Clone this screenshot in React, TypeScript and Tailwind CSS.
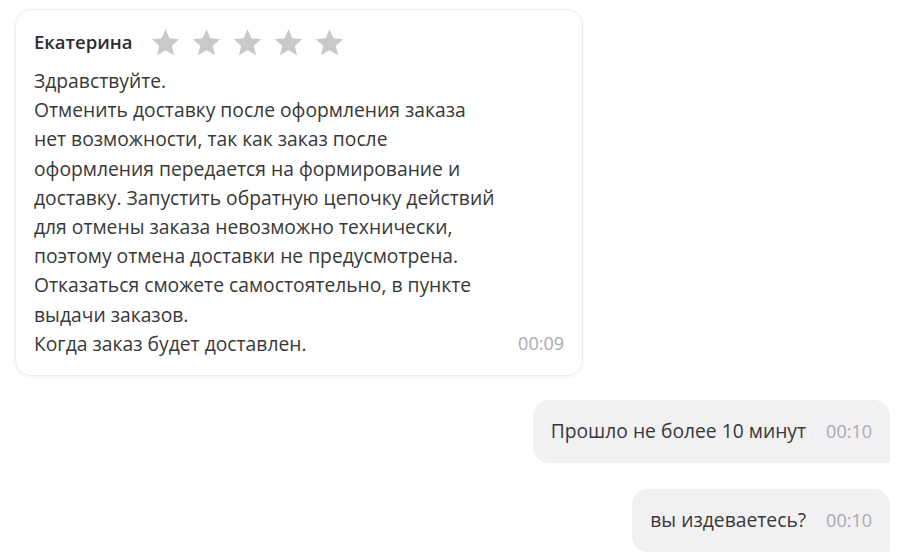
import React from "react";

const Star = () => (
  <svg viewBox="0 0 24 24" className="w-[31px] h-[31px]" fill="#c9c9cb">
    <path d="M12 1.8l3.05 6.95 7.55.7-5.7 5 1.7 7.4L12 17.95 5.4 21.85l1.7-7.4-5.7-5 7.55-.7z" />
  </svg>
);

const bodyLines = [
  "Здравствуйте.",
  "Отменить доставку после оформления заказа",
  "нет возможности, так как заказ после",
  "оформления передается на формирование и",
  "доставку. Запустить обратную цепочку действий",
  "для отмены заказа невозможно технически,",
  "поэтому отмена доставки не предусмотрена.",
  "Отказаться сможете самостоятельно, в пункте",
  "выдачи заказов.",
];

const OutBubble = ({ text, time }: { text: string; time: string }) => (
  <div className="self-end flex items-center gap-[20px] h-[63px] pl-[18px] pr-[18px] bg-[#f1f1f3] rounded-[16px] rounded-br-[2px]">
    <span className="text-[#383838]">{text}</span>
    <span className="text-[#a9a9ad] text-[18px]">{time}</span>
  </div>
);

export default function App() {
  return (
    <div
      className="w-[900px] h-[556px] bg-white overflow-hidden text-[19.3px] flex flex-col"
      style={{ fontFamily: '"Open Sans", "Noto Sans", Arial, sans-serif' }}
    >
      <div className="ml-[15px] mt-[9px] w-[568px] h-[367px] border border-[#ececef] rounded-[16px] shadow-[0_1px_4px_rgba(0,0,0,0.06)] pl-[18px] pr-[18px] pt-[22px]">
        <div className="flex items-center gap-[18px] h-[40px] -mt-[10px]">
          <span className="font-semibold text-[#2e2e2e] text-[18.5px]">Екатерина</span>
          <div className="flex gap-[10px]">
            <Star />
            <Star />
            <Star />
            <Star />
            <Star />
          </div>
        </div>
        <div className="text-[#383838] leading-[29.2px] mt-[4px]">
          {bodyLines.map((l) => (
            <div key={l}>{l}</div>
          ))}
          <div className="flex justify-between">
            <span>Когда заказ будет доставлен.</span>
            <span className="text-[#a9a9ad] text-[18px]">00:09</span>
          </div>
        </div>
      </div>
      <div className="flex flex-col pr-[10px] mt-[24px] gap-[26px]">
        <OutBubble text="Прошло не более 10 минут" time="00:10" />
        <OutBubble text="вы издеваетесь?" time="00:10" />
      </div>
    </div>
  );
}
